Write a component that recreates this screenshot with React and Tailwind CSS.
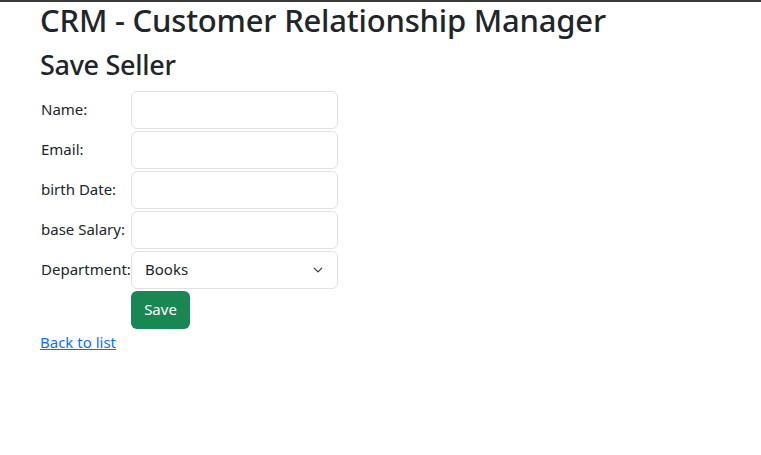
import { useState } from 'react';

const fields = [
  { label: 'Name:', type: 'text' },
  { label: 'Email:', type: 'email' },
  { label: 'birth Date:', type: 'text' },
  { label: 'base Salary:', type: 'text' },
];

const inputCls =
  'block w-[207px] h-[38px] rounded-[6px] border border-[#dee2e6] bg-white px-3 text-[15px] text-[#212529] outline-none';

export default function App() {
  const [dept, setDept] = useState('Books');

  return (
    <div className="min-h-[455px] w-[761px] border-t-2 border-[#3b3b3b] bg-white font-['Segoe_UI','Noto_Sans',sans-serif] text-[#212529]">
      <div className="px-10">
        <h1 className="mb-[10px] text-[31px] leading-[1.2] font-medium tracking-[-0.2px]">
          CRM - Customer Relationship Manager
        </h1>
        <h2 className="mb-2 text-[27px] leading-[1.2] font-medium tracking-[-0.3px]">Save Seller</h2>

        <form className="grid grid-cols-[91px_207px] gap-y-[2px] py-px">
          {fields.map((f) => (
            <div key={f.label} className="contents">
              <label className="flex items-center pl-px text-[15px]">{f.label}</label>
              <input type={f.type} className={inputCls} />
            </div>
          ))}
          <label className="flex items-center pl-px text-[15px]">Department:</label>
          <div className="relative">
            <select
              value={dept}
              onChange={(e) => setDept(e.target.value)}
              className={inputCls + ' appearance-none pl-[13px]'}
            >
              <option>Books</option>
              <option>Computers</option>
              <option>Electronics</option>
              <option>Fashion</option>
            </select>
            <svg
              className="pointer-events-none absolute right-[14px] top-[14px] h-[10px] w-[12px]"
              viewBox="0 0 16 16"
              fill="none"
              stroke="#343a40"
              strokeWidth="2"
              strokeLinecap="round"
              strokeLinejoin="round"
            >
              <path d="m2 5 6 6 6-6" />
            </svg>
          </div>
          <div />
          <div>
            <button
              type="button"
              className="h-[38px] w-[59px] rounded-[6px] bg-[#198754] text-[15px] text-white"
            >
              Save
            </button>
          </div>
        </form>

        <a href="#" className="mt-px inline-block text-[15px] text-[#0d6efd] underline">
          Back to list
        </a>
      </div>
    </div>
  );
}
